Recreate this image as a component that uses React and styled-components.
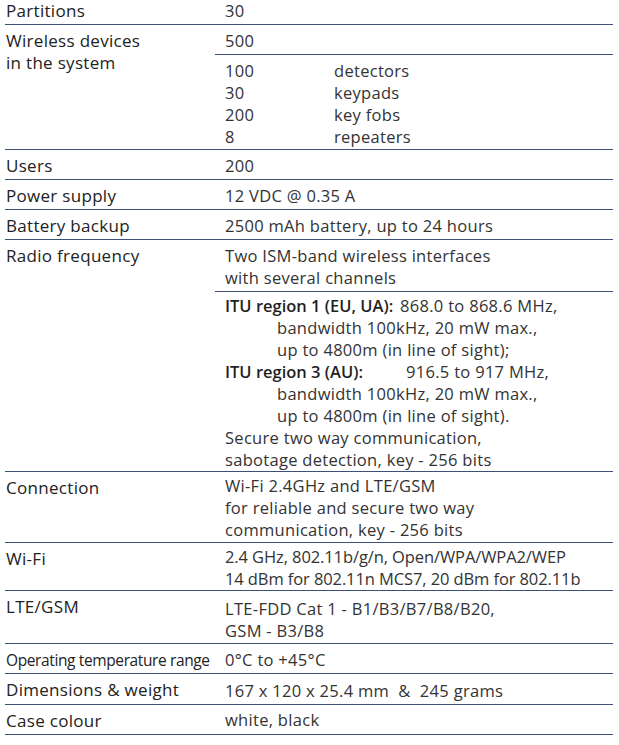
import React from "react";
import styled, { createGlobalStyle } from "styled-components";

const GlobalStyle = createGlobalStyle`
  html, body {
    margin: 0;
    padding: 0;
    background: #ffffff;
  }
  body {
    font-family: "Open Sans", "Noto Sans", "Liberation Sans", sans-serif;
    color: #2b2b2b;
  }
`;

const LINE = "#3d5076";

const Table = styled.div`
  width: 608px;
  margin: -5px 0 0 5px;
`;

const Row = styled.div`
  display: grid;
  grid-template-columns: 210px 1fr;
  border-bottom: 1px solid ${LINE};
`;

const Label = styled.div`
  padding: 5px 0 2px 1px;
  font-size: ${(p) => (p.$small ? "15.5px" : "17px")};
  letter-spacing: ${(p) => (p.$small ? "-0.38px" : "0.3px")};
  line-height: 22px;
  color: #222;
  white-space: nowrap;
`;

const Values = styled.div`
  display: flex;
  flex-direction: column;
`;

const Cell = styled.div`
  padding: ${(p) => p.$pt ?? 5}px 0 ${(p) => p.$pb ?? 2}px 10px;
  font-size: 16.5px;
  letter-spacing: ${(p) => (p.$tight ? "-0.1px" : "0.3px")};
  line-height: 22px;
  color: #333;
  & + & {
    border-top: 1px solid ${LINE};
  }
`;

const Line = styled.div`
  padding-left: ${(p) => (p.$indent ? "52px" : "0")};
  white-space: nowrap;
`;

const DeviceGrid = styled.div`
  display: grid;
  grid-template-columns: 109px 1fr;
`;

const Key = styled.span`
  display: inline-block;
  min-width: ${(p) => p.$w}px;
  font-weight: 600;
  letter-spacing: 0;
  color: #1f1f1f;
`;

const devices = [
  ["100", "detectors"],
  ["30", "keypads"],
  ["200", "key fobs"],
  ["8", "repeaters"],
];

const Spec = ({ label, small, children }) => (
  <Row>
    <Label $small={small}>{label}</Label>
    <Values>{children}</Values>
  </Row>
);

export default function App() {
  return (
    <>
      <GlobalStyle />
      <Table>
        <Spec label="Partitions">
          <Cell>30</Cell>
        </Spec>
        <Spec
          label={
            <>
              Wireless devices
              <br />
              in the system
            </>
          }
        >
          <Cell>500</Cell>
          <Cell $pb={1}>
            <DeviceGrid>
              {devices.map(([n, name]) => (
                <React.Fragment key={name}>
                  <span>{n}</span>
                  <span>{name}</span>
                </React.Fragment>
              ))}
            </DeviceGrid>
          </Cell>
        </Spec>
        <Spec label="Users">
          <Cell>200</Cell>
        </Spec>
        <Spec label="Power supply">
          <Cell>12 VDC @ 0.35 A</Cell>
        </Spec>
        <Spec label="Battery backup">
          <Cell>2500 mAh battery, up to 24 hours</Cell>
        </Spec>
        <Spec label="Radio frequency">
          <Cell>
            <Line>Two ISM-band wireless interfaces</Line>
            <Line>with several channels</Line>
          </Cell>
          <Cell $pt={3} $pb={0}>
            <Line>
              <Key $w={175}>ITU region 1 (EU, UA):</Key>868.0 to 868.6 MHz,
            </Line>
            <Line $indent>bandwidth 100kHz, 20 mW max.,</Line>
            <Line $indent>up to 4800m (in line of sight);</Line>
            <Line>
              <Key $w={181}>ITU region 3 (AU):</Key>916.5 to 917 MHz,
            </Line>
            <Line $indent>bandwidth 100kHz, 20 mW max.,</Line>
            <Line $indent>up to 4800m (in line of sight).</Line>
            <Line>Secure two way communication,</Line>
            <Line>sabotage detection, key - 256 bits</Line>
          </Cell>
        </Spec>
        <Spec label="Connection">
          <Cell $pt={3} $pb={1}>
            <Line>Wi-Fi 2.4GHz and LTE/GSM</Line>
            <Line>for reliable and secure two way</Line>
            <Line>communication, key - 256 bits</Line>
          </Cell>
        </Spec>
        <Spec label="Wi-Fi">
          <Cell $pt={3} $pb={0} $tight>
            <Line>2.4 GHz, 802.11b/g/n, Open/WPA/WPA2/WEP</Line>
            <Line>14 dBm for 802.11n MCS7, 20 dBm for 802.11b</Line>
          </Cell>
        </Spec>
        <Spec label="LTE/GSM">
          <Cell $pt={7} $pb={1}>
            <Line>LTE-FDD Cat 1 - B1/B3/B7/B8/B20,</Line>
            <Line>GSM - B3/B8</Line>
          </Cell>
        </Spec>
        <Spec label="Operating temperature range" small>
          <Cell>0°C to +45°C</Cell>
        </Spec>
        <Spec label="Dimensions & weight">
          <Cell $pt={6} $pb={2}>
            167 x 120 x 25.4 mm &nbsp;&amp;&nbsp; 245 grams
          </Cell>
        </Spec>
        <Spec label="Case colour">
          <Cell $pt={4} $pb={3}>
            white, black
          </Cell>
        </Spec>
      </Table>
    </>
  );
}
